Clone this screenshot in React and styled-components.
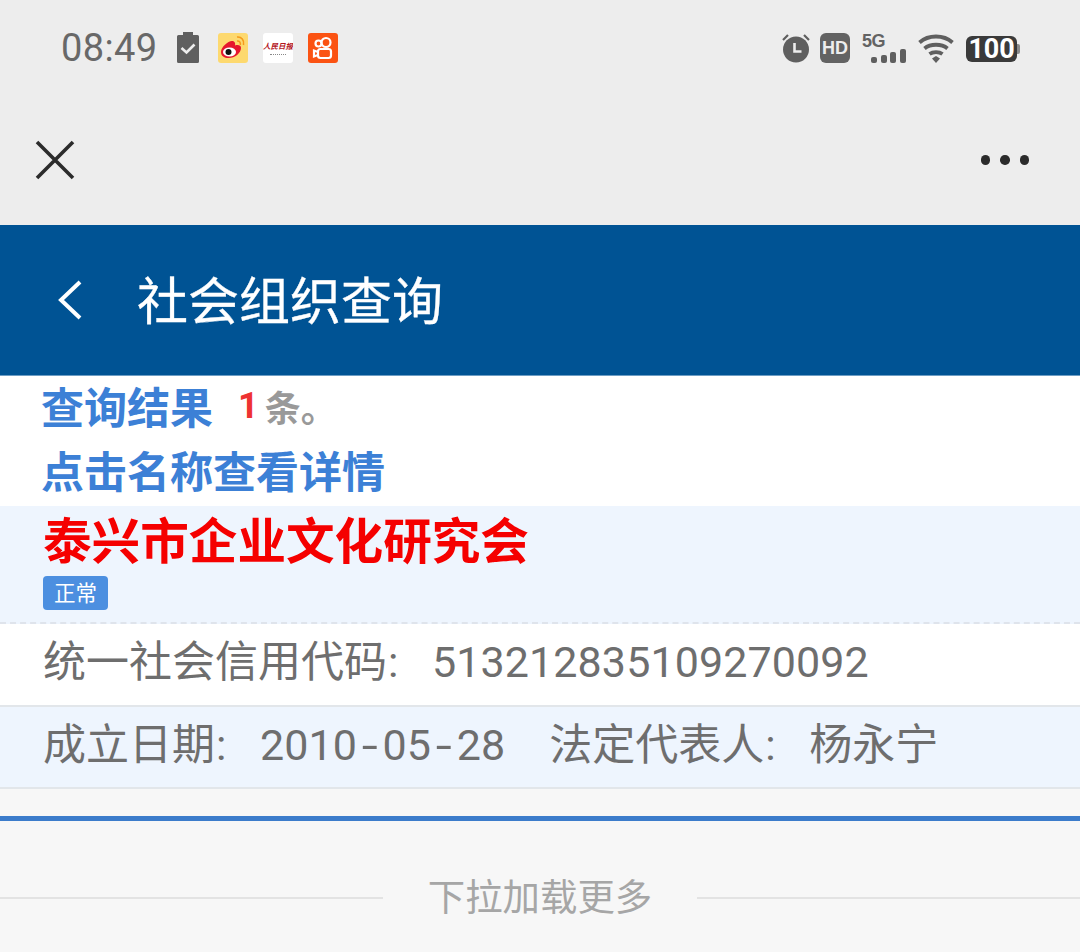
import React from "react";
import styled, { createGlobalStyle } from "styled-components";

const CJK = `Roboto, "Noto Sans CJK SC", sans-serif`;

const GlobalStyle = createGlobalStyle`
  html, body {
    margin: 0;
    padding: 0;
    background: #f7f7f7;
    font-family: ${CJK};
  }
`;

const Page = styled.div`
  width: 1080px;
  height: 952px;
  overflow: hidden;
  display: flex;
  flex-direction: column;
  background: #f7f7f7;
`;

const StatusBar = styled.div`
  height: 95px;
  flex: none;
  background: #ededed;
  display: flex;
  justify-content: space-between;
  align-items: center;
  padding: 0 63px 0 61px;
  box-sizing: border-box;
`;

const StatusLeft = styled.div`
  display: flex;
  align-items: center;
`;

const StatusRight = styled.div`
  display: flex;
  align-items: center;
  gap: 12px;
`;

const Clock = styled.span`
  font: 400 38px/1 Roboto, sans-serif;
  letter-spacing: 0.4px;
  color: #686868;
  width: 116px;
  white-space: nowrap;
`;

const Notifications = styled.div`
  display: flex;
  gap: 15px;
  margin-left: 19px;
`;

const AppIcon = styled.div`
  width: 30px;
  height: 30px;
  border-radius: 3px;
  background: ${(props) => props.$bg};
  display: flex;
  flex-direction: column;
  align-items: center;
  justify-content: center;
  overflow: hidden;
`;

const PeopleMark = styled.span`
  font: italic 700 7.500px/10px "Noto Sans CJK SC", serif;
  color: #b3151c;
  white-space: nowrap;
`;

const PeopleCaption = styled.span`
  width: 16px;
  height: 1px;
  margin-top: 2px;
  border-bottom: 1px dotted #888;
`;

const HdBadge = styled.span`
  width: 30px;
  height: 30px;
  margin-left: -2px;
  border-radius: 6px;
  background: #636363;
  color: #ededed;
  font: 700 18px/30px "Liberation Sans", sans-serif;
  text-align: center;
`;

const SignalBox = styled.div`
  position: relative;
  width: 44px;
  height: 30px;
`;

const FiveG = styled.span`
  position: absolute;
  left: 0;
  top: -1px;
  font: 700 18px/1 "Liberation Sans", sans-serif;
  letter-spacing: -0.5px;
  color: #636363;
`;

const SignalBars = styled.svg`
  position: absolute;
  right: 0;
  bottom: 0;
`;

const BatteryBody = styled.div`
  position: relative;
  width: 51px;
  height: 26px;
  margin-top: 2px;
  border-radius: 6px;
  background: #3a3a3a;
  color: #fff;
  font: 700 27px/26px Roboto, sans-serif;
  text-align: center;
  letter-spacing: -0.2px;
  &::after {
    content: "";
    position: absolute;
    right: -3px;
    top: 8px;
    width: 3px;
    height: 10px;
    border-radius: 0 2px 2px 0;
    background: #8a8a8a;
  }
`;

const NavBar = styled.div`
  height: 130px;
  flex: none;
  background: #ededed;
  display: flex;
  justify-content: space-between;
  align-items: center;
  padding: 0 51px 0 35px;
  box-sizing: border-box;
`;

const Header = styled.div`
  height: 151px;
  flex: none;
  box-sizing: border-box;
  background: #005394;
  border-bottom: 1px solid #6d9dc4;
  display: flex;
  align-items: center;
  padding-left: 57px;
  gap: 54px;
`;

const HeaderTitle = styled.h1`
  margin: 0 0 4px;
  font: 400 51px/1 "Noto Sans CJK SC", sans-serif;
  color: #fff;
  -webkit-text-stroke: 0.3px #fff;
`;

const Summary = styled.div`
  height: 130px;
  flex: none;
  background: #fff;
  box-sizing: border-box;
  padding-left: 41px;
  display: flex;
  flex-direction: column;
`;

const SummaryLine = styled.div`
  height: 64px;
  padding-bottom: 5px;
  box-sizing: border-box;
  display: flex;
  align-items: center;
`;

const BlueLabel = styled.span`
  font: 700 43px/1 "Noto Sans CJK SC", sans-serif;
  color: #3c80d6;
`;

const Count = styled.span`
  font: 700 36px/1 Roboto, sans-serif;
  color: #ee3232;
  margin-left: 25px;
`;

const Unit = styled.span`
  font: 700 36px/1 "Noto Sans CJK SC", sans-serif;
  color: #999;
  margin-left: 6px;
`;

const OrgCard = styled.div`
  height: 118px;
  flex: none;
  box-sizing: border-box;
  background: #eef5fe;
  border-bottom: 2px dashed #dfe4ec;
  padding: 8px 0 0 43px;
`;

const OrgName = styled.div`
  font: 700 48.600px/48px "Noto Sans CJK SC", sans-serif;
  color: #f50000;
  white-space: nowrap;
`;

const Tag = styled.span`
  display: block;
  width: 65px;
  height: 34px;
  margin: 14px 0 0;
  border-radius: 4px;
  background: #4c8fe0;
  color: #fff;
  font: 400 21.500px/31px "Noto Sans CJK SC", sans-serif;
  text-align: center;
`;

const InfoRow = styled.div`
  height: ${(props) => props.$height}px;
  flex: none;
  box-sizing: border-box;
  background: ${(props) => (props.$tint ? "#eef5fe" : "#fff")};
  border-bottom: 2px solid #e2e6ea;
  padding: 0 0 4px 43px;
  display: flex;
  align-items: center;
  font: 400 43px/1 ${CJK};
  color: #6e6e6e;
  white-space: pre;
`;

const Colon = styled.span`
  display: inline-block;
  width: 45px;
  padding-left: 1px;
  box-sizing: border-box;
  font-family: Roboto, sans-serif;
`;

const Hyphen = styled.span`
  display: inline-block;
  width: 25.500px;
  text-align: center;
  transform: scaleX(1.35);
`;

const DateValue = styled.span`
  margin-right: 44px;
  letter-spacing: 0.1px;
`;

const CodeValue = styled.span`
  letter-spacing: 0.1px;
`;

const ProgressLine = styled.div`
  height: 5px;
  flex: none;
  margin-top: 27px;
  background: #3c7ccb;
`;

const LoadMore = styled.div`
  flex: 1;
  display: flex;
  align-items: center;
  padding-top: 23px;
  box-sizing: border-box;
  gap: 45px;
`;

const Rule = styled.div`
  flex: 1;
  height: 2px;
  background: #e3e3e3;
`;

const LoadText = styled.span`
  margin-bottom: 4px;
  font: 400 37.400px/1 "Noto Sans CJK SC", sans-serif;
  color: #a6a6a6;
`;

const Dots = styled.div`
  display: flex;
  gap: 10px;
`;

const Dot = styled.span`
  width: 9.500px;
  height: 9.500px;
  border-radius: 50%;
  background: #2b2b2b;
`;

const ClipboardIcon = () => (
  <svg width="22" height="31" viewBox="0 0 22 31">
    <path fill="#5f5f5f" d="M6 0h10v3h4.500a1.500 1.500 0 0 1 1.500 1.500v25a1.500 1.500 0 0 1-1.500 1.500H1.500A1.500 1.500 0 0 1 0 29.500v-25A1.500 1.500 0 0 1 1.500 3H6z" />
    <path fill="none" stroke="#ededed" strokeWidth="2.600" d="M4.500 16l5 4.500 8-8" />
  </svg>
);

const WeiboIcon = () => (
  <svg width="30" height="30" viewBox="0 0 30 30">
    <path fill="#e6162d" d="M3 19c0-5 7-11 11-11 3 0 3.500 2.500 3 4.500 3-1 6-.5 6 2.500 0 5-6 10-12.500 10C6.500 25 3 23 3 19z" />
    <ellipse cx="11.500" cy="19" rx="6.500" ry="4.500" fill="#fff" />
    <circle cx="10.500" cy="19" r="3" fill="#111" />
    <path fill="none" stroke="#f59a1b" strokeWidth="1.600" d="M19 4c4.500-.5 7.500 3 6.500 8M19 8c2.500-.3 3.800 1.500 3.300 4" />
  </svg>
);

const KuaishouIcon = () => (
  <svg width="30" height="30" viewBox="0 0 30 30" fill="none" stroke="#fff" strokeWidth="2.200">
    <circle cx="18" cy="9.500" r="4.500" />
    <circle cx="10.500" cy="10.500" r="3" />
    <rect x="10" y="16" width="13" height="9" rx="2.500" />
    <path d="M10 19l-4-1.500v6l4-1.500" />
  </svg>
);

const AlarmIcon = () => (
  <svg width="28" height="30" viewBox="0 0 28 30">
    <circle cx="14" cy="16.500" r="13" fill="#5f5f5f" />
    <path fill="none" stroke="#5f5f5f" strokeWidth="2.200" d="M1 7l5-5M27 7l-5-5" />
    <path fill="none" stroke="#ededed" strokeWidth="2.600" d="M12.500 10v8.500h7" />
  </svg>
);

const WifiIcon = () => (
  <svg width="36" height="30" viewBox="0 0 36 30" fill="none" stroke="#5f5f5f" strokeWidth="3.800">
    <path d="M1.500 9.500c9-8 24-8 33 0" />
    <path d="M6.500 15.500c6-5 17-5 23 0" />
    <path d="M11.500 21c3.500-2.500 9.500-2.500 13 0" />
    <path fill="#5f5f5f" stroke="none" d="M14 25.500l4-2.500 4 2.500-4 4.500z" />
  </svg>
);

const CloseIcon = () => (
  <svg width="40" height="40" viewBox="0 0 40 40">
    <path fill="none" stroke="#2b2b2b" strokeWidth="3.600" d="M2 2l36 36M38 2L2 38" />
  </svg>
);

const BackIcon = () => (
  <svg width="26" height="40" viewBox="0 0 26 40">
    <path fill="none" stroke="#fff" strokeWidth="4" d="M23 2L4 20l19 18" />
  </svg>
);

const App = () => {
  return (
    <Page>
      <GlobalStyle />
      <StatusBar>
        <StatusLeft>
          <Clock>08:49</Clock>
          <ClipboardIcon />
          <Notifications>
            <AppIcon $bg="#fdd96f"><WeiboIcon /></AppIcon>
            <AppIcon $bg="#fff">
              <PeopleMark>人民日报</PeopleMark>
              <PeopleCaption />
            </AppIcon>
            <AppIcon $bg="#fb5313"><KuaishouIcon /></AppIcon>
          </Notifications>
        </StatusLeft>
        <StatusRight>
          <AlarmIcon />
          <HdBadge>HD</HdBadge>
          <SignalBox>
            <FiveG>5G</FiveG>
            <SignalBars width="35" height="14" viewBox="0 0 35 14" fill="#5f5f5f">
              <rect x="0" y="8" width="6" height="6" rx="2" />
              <rect x="10" y="6" width="6" height="8" rx="2" />
              <rect x="19" y="3" width="6" height="11" rx="2" />
              <rect x="29" y="0" width="6" height="14" rx="2" />
            </SignalBars>
          </SignalBox>
          <WifiIcon />
          <BatteryBody>100</BatteryBody>
        </StatusRight>
      </StatusBar>
      <NavBar>
        <CloseIcon />
        <Dots>
          <Dot />
          <Dot />
          <Dot />
        </Dots>
      </NavBar>
      <Header>
        <BackIcon />
        <HeaderTitle>社会组织查询</HeaderTitle>
      </Header>
      <Summary>
        <SummaryLine>
          <BlueLabel>查询结果</BlueLabel>
          <Count>1</Count>
          <Unit>条。</Unit>
        </SummaryLine>
        <SummaryLine>
          <BlueLabel>点击名称查看详情</BlueLabel>
        </SummaryLine>
      </Summary>
      <OrgCard>
        <OrgName>泰兴市企业文化研究会</OrgName>
        <Tag>正常</Tag>
      </OrgCard>
      <InfoRow $height={83}>
        <span>统一社会信用代码</span>
        <Colon>:</Colon>
        <CodeValue>513212835109270092</CodeValue>
      </InfoRow>
      <InfoRow $height={82} $tint>
        <span>成立日期</span>
        <Colon>:</Colon>
        <DateValue>2010<Hyphen>-</Hyphen>05<Hyphen>-</Hyphen>28</DateValue>
        <span>法定代表人</span>
        <Colon>:</Colon>
        <span>杨永宁</span>
      </InfoRow>
      <ProgressLine />
      <LoadMore>
        <Rule />
        <LoadText>下拉加载更多</LoadText>
        <Rule />
      </LoadMore>
    </Page>
  );
};

export default App;
